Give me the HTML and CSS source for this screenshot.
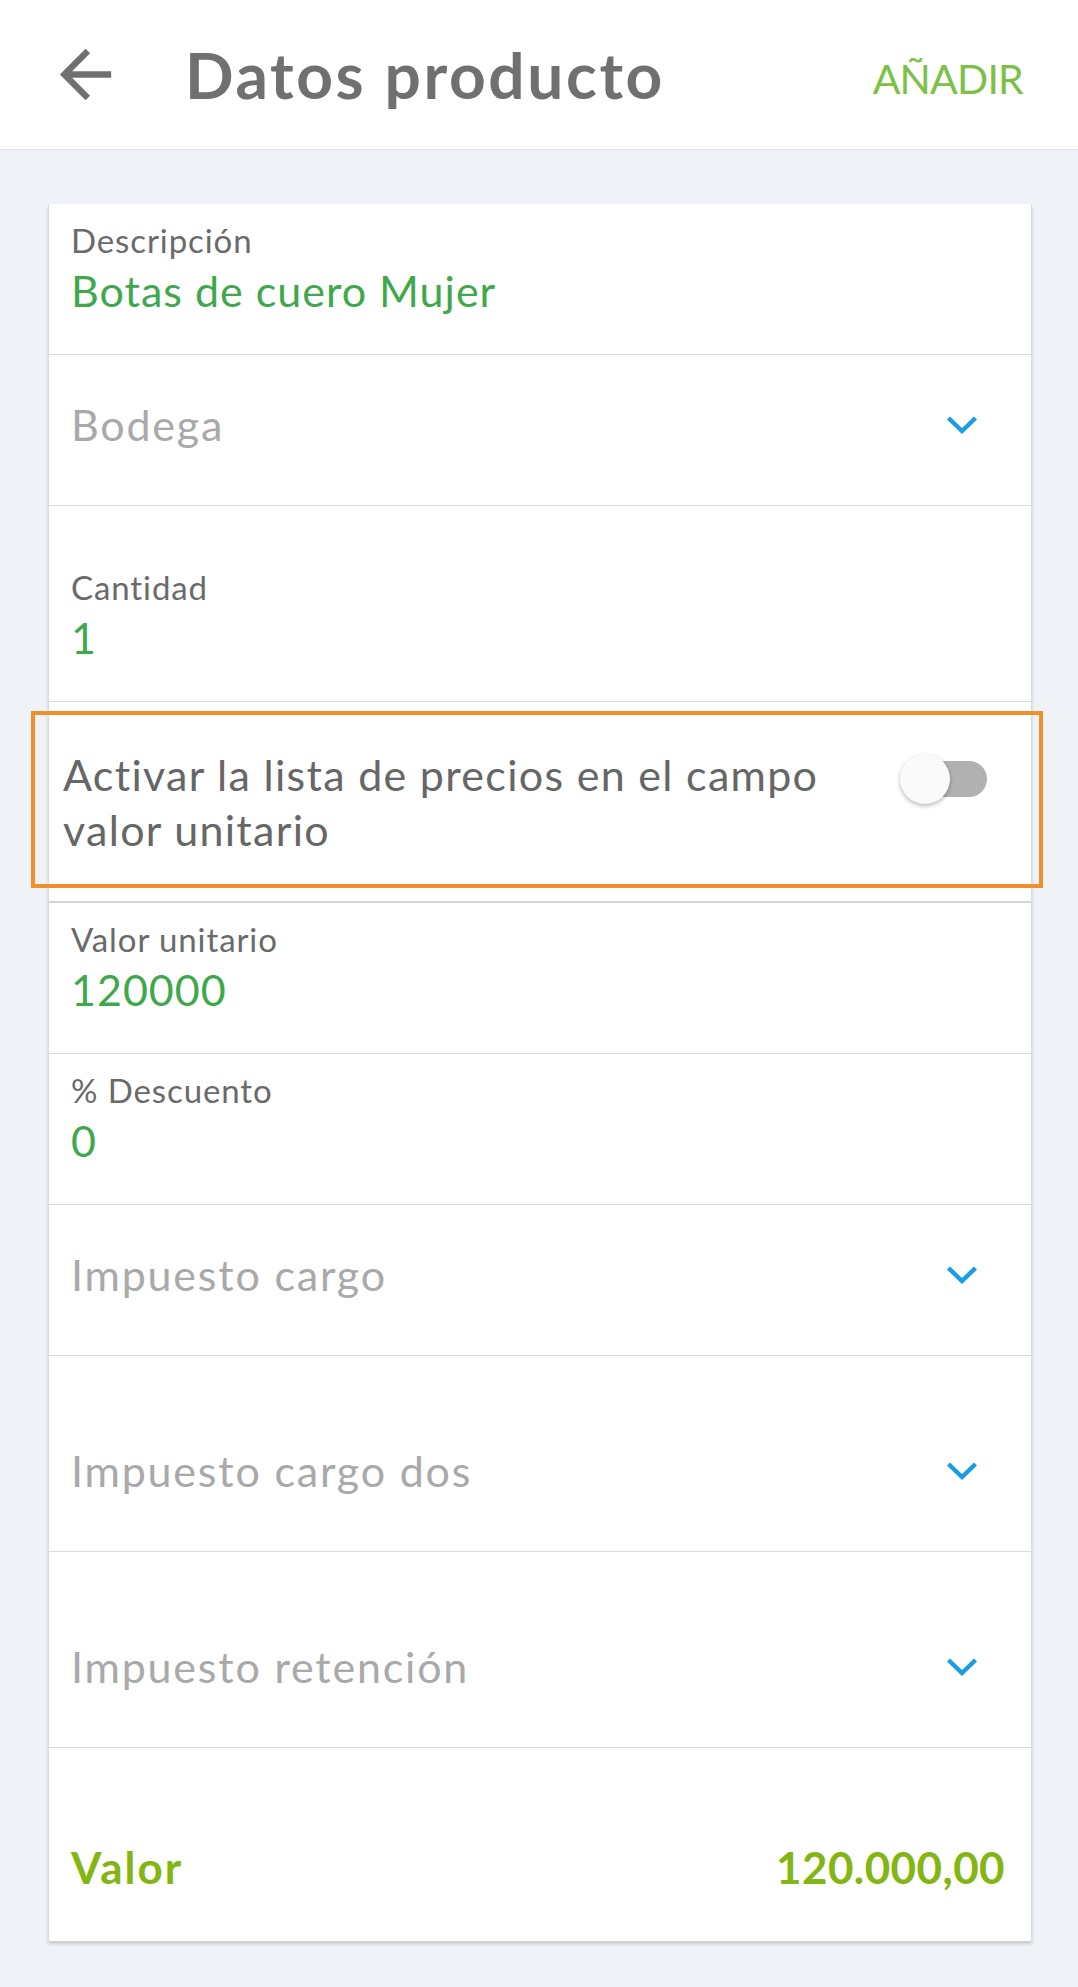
FILE: index.html
```html
<!DOCTYPE html>
<html lang="es">
<head>
<meta charset="utf-8">
<title>Datos producto</title>
<link rel="stylesheet" href="styles.css">
</head>
<body>
<header class="topbar">
  <svg class="back-icon" viewBox="0 0 24 24" aria-hidden="true"><path d="M20 11H7.83l5.59-5.59L12 4l-8 8 8 8 1.41-1.41L7.83 13H20v-2z"/></svg>
  <h1 class="title">Datos producto</h1>
  <span class="action">AÑADIR</span>
</header>

<main class="card">
  <div class="field">
    <div class="label">Descripción</div>
    <div class="value">Botas de cuero Mujer</div>
  </div>

  <div class="select">
    <span class="placeholder">Bodega</span>
    <svg class="chev" viewBox="0 0 32 20" aria-hidden="true"><polyline points="2.5,3 16,16 29.5,3"/></svg>
  </div>

  <div class="field tall">
    <div class="label">Cantidad</div>
    <div class="value">1</div>
  </div>

  <div class="toggle-row">
    <div class="toggle-text">Activar la lista de precios en el campo valor unitario</div>
    <div class="switch"><span class="track"></span><span class="thumb"></span></div>
    <div class="highlight"></div>
  </div>

  <div class="field">
    <div class="label">Valor unitario</div>
    <div class="value">120000</div>
  </div>

  <div class="field">
    <div class="label">% Descuento</div>
    <div class="value">0</div>
  </div>

  <div class="select">
    <span class="placeholder">Impuesto cargo</span>
    <svg class="chev" viewBox="0 0 32 20" aria-hidden="true"><polyline points="2.5,3 16,16 29.5,3"/></svg>
  </div>

  <div class="select tall">
    <span class="placeholder">Impuesto cargo dos</span>
    <svg class="chev" viewBox="0 0 32 20" aria-hidden="true"><polyline points="2.5,3 16,16 29.5,3"/></svg>
  </div>

  <div class="select tall">
    <span class="placeholder">Impuesto retención</span>
    <svg class="chev" viewBox="0 0 32 20" aria-hidden="true"><polyline points="2.5,3 16,16 29.5,3"/></svg>
  </div>

  <div class="total">
    <span class="total-label">Valor</span>
    <span class="total-amount">120.000,00</span>
  </div>
</main>
</body>
</html>
```

FILE: styles.css
```css
* { box-sizing: border-box; }

html, body {
  margin: 0;
  padding: 0;
}

body {
  background: #eff2f6;
  font-family: "Lato", "Liberation Sans", sans-serif;
  min-height: 1987px;
  padding-bottom: 40px;
}

.topbar {
  height: 150px;
  background: #ffffff;
  border-bottom: 1px solid #dde1e6;
  display: flex;
  align-items: center;
  padding: 0 55px 0 47px;
}

.back-icon {
  width: 77px;
  height: 77px;
  fill: #707070;
  flex: none;
}

.title {
  margin: 0 0 0 61px;
  font-size: 64px;
  line-height: 77px;
  font-weight: 700;
  color: #707070;
  letter-spacing: 2.6px;
  flex: 1;
}

.action {
  font-size: 41px;
  line-height: 50px;
  color: #7cc146;
  letter-spacing: -0.8px;
  padding-top: 8px;
}

.card {
  margin: 54px 46px 0 48px;
  background: #ffffff;
  border-left: 1px solid #d8dbdf;
  border-right: 1px solid #d8dbdf;
  box-shadow: 0 3px 3px rgba(0, 0, 0, 0.16);
}

.field {
  padding: 16px 22px 38px;
  border-bottom: 1px solid #d8dbdf;
}

.field.tall {
  padding-top: 61px;
}

.label {
  font-size: 33px;
  line-height: 40px;
  color: #6a6a6a;
  letter-spacing: 0.9px;
}

.value {
  margin-top: 6px;
  font-size: 43px;
  line-height: 50px;
  color: #3fa84c;
  letter-spacing: 1px;
}

.select {
  display: flex;
  align-items: center;
  justify-content: space-between;
  padding: 45px 53px 55px 22px;
  border-bottom: 1px solid #d8dbdf;
}

.select.tall {
  padding-top: 90px;
}

.placeholder {
  font-size: 43px;
  line-height: 50px;
  color: #a9a9a9;
  letter-spacing: 1.8px;
}

.chev {
  width: 32px;
  height: 20px;
  fill: none;
  stroke: #1b9de4;
  stroke-width: 4.5;
  flex: none;
}

.toggle-row {
  position: relative;
  display: flex;
  align-items: flex-start;
  padding: 45px 44px 44px 14px;
  border-bottom: 2px solid #d3d5d8;
}

.toggle-text {
  flex: 1;
  font-size: 43px;
  line-height: 55px;
  color: #666666;
  letter-spacing: 1.3px;
}

.switch {
  position: relative;
  flex: none;
  width: 87px;
  height: 50px;
  margin-top: 7px;
  margin-left: 20px;
}

.track {
  position: absolute;
  left: 2px;
  top: 7px;
  width: 85px;
  height: 36px;
  border-radius: 18px;
  background: #b1b1b1;
}

.thumb {
  position: absolute;
  left: 0;
  top: 0;
  width: 50px;
  height: 50px;
  border-radius: 50%;
  background: #fafafa;
  box-shadow: 0 2px 4px rgba(0, 0, 0, 0.28);
}

.highlight {
  position: absolute;
  left: -18px;
  right: -12px;
  top: 9px;
  bottom: 13px;
  border: 4px solid #f0902a;
  pointer-events: none;
}

.total {
  display: flex;
  justify-content: space-between;
  align-items: center;
  padding: 93px 26px 48px 22px;
  font-size: 44px;
  line-height: 52px;
  font-weight: 700;
  color: #84b513;
}

.total-label {
  letter-spacing: 2px;
}

.total-amount {
  letter-spacing: 0.4px;
}
```
